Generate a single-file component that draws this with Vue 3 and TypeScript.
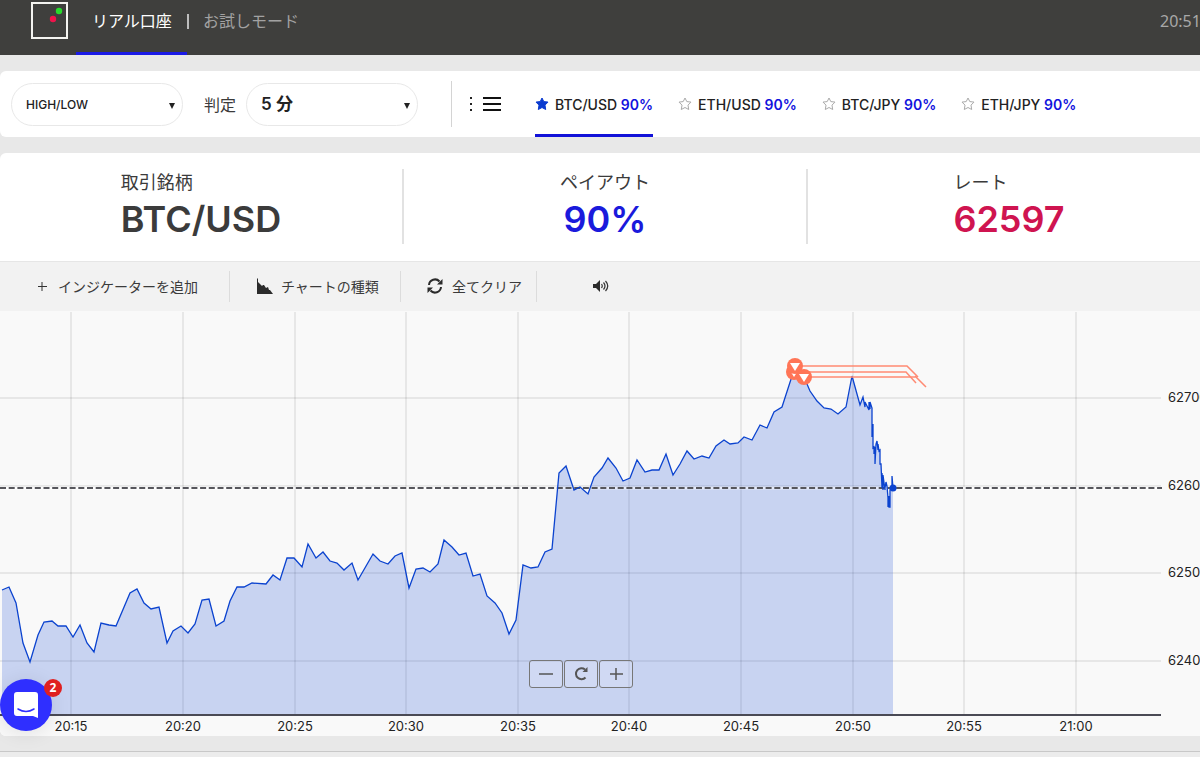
<script setup lang="ts">
import { ref } from 'vue'

interface Pair {
  symbol: string
  payout: string
  favourite: boolean
}

interface Tick {
  label: string
  at: number
}

const pairs: Pair[] = [
  { symbol: 'BTC/USD', payout: '90%', favourite: true },
  { symbol: 'ETH/USD', payout: '90%', favourite: false },
  { symbol: 'BTC/JPY', payout: '90%', favourite: false },
  { symbol: 'ETH/JPY', payout: '90%', favourite: false },
]

const activePair = ref('BTC/USD')

const times: Tick[] = [
  { label: '20:15', at: 71 },
  { label: '20:20', at: 183 },
  { label: '20:25', at: 295 },
  { label: '20:30', at: 406 },
  { label: '20:35', at: 518 },
  { label: '20:40', at: 629 },
  { label: '20:45', at: 741 },
  { label: '20:50', at: 853 },
  { label: '20:55', at: 964 },
  { label: '21:00', at: 1076 },
]

const prices: Tick[] = [
  { label: '62700', at: 398 },
  { label: '62600', at: 486 },
  { label: '62500', at: 573 },
  { label: '62400', at: 661 },
]

const series: string = [
  '2,590 9,587 16,603 23,643 30,662 38,635 44,622 52,621 58,626 66,626 73,637 80,625 87,643 94,652',
  '101,623 109,625 116,626 130,593 137,589 144,603 151,609 159,607 167,643 173,631 181,626 188,633',
  '195,624 202,600 209,599 216,626 224,621 230,601 237,587 244,587 252,583 266,584 273,575 280,580',
  '287,558 294,558 302,567 308,544 316,558 323,552 330,561 337,563 344,570 352,563 358,580 373,554',
  '380,561 388,564 395,556 402,553 409,588 416,569 423,568 430,572 438,564 444,540 452,547 459,555',
  '466,553 473,576 480,574 487,596 495,603 502,613 509,634 516,620 523,565 531,568 538,567 545,552',
  '552,549 559,473 566,466 574,490 580,487 588,494 594,477 602,468 608,458 616,468 623,481 630,478',
  '637,460 645,472 652,470 659,470 666,454 673,475 680,464 687,451 694,459 702,456 709,458 716,446',
  '724,440 730,444 738,443 744,437 752,440 760,425 767,428 774,412 782,407 792,376 798,370 804,377',
  '810,391 817,401 824,408 831,409 838,414 846,407 852,376 860,405 863,397 865,407 865,402 867,406',
  '869,410 869,402 870,409 870,402 872,408 872,437 873,424 873,448 874,447 874,454 875,447 875,464',
  '876,444 877,441 878,450 878,444 879,451 880,450 880,464 881,464 882,488 882,473 883,490 883,475',
  '885,490 885,488 886,482 887,486 888,498 888,507 889,496 889,507 890,507 890,490 892,487 892,476 893,488',
].join(' ')

const markers = [
  { x: 794, y: 372 },
  { x: 795, y: 366 },
  { x: 804, y: 377 },
]
</script>

<template>
  <div class="page">
    <header class="top">
      <a class="logo" href="#" aria-label="ホーム">
        <svg viewBox="0 0 37 37" width="37" height="37">
          <rect x="1" y="1" width="35" height="35" fill="none" stroke="#f4f4f0" stroke-width="2" />
          <circle cx="22" cy="17" r="3.200" fill="#f0134c" />
          <circle cx="28" cy="9" r="3.200" fill="#27dc2c" />
        </svg>
      </a>
      <nav class="modes">
        <a class="mode current" href="#real">リアル口座</a>
        <a class="mode" href="#trial">お試しモード</a>
      </nav>
      <time class="clock">20:51</time>
    </header>

    <section class="panel controls">
      <div class="pick">
        <select class="small" aria-label="取引種別">
          <option>HIGH/LOW</option>
        </select>
        <span class="arrow"></span>
      </div>
      <label class="judge" for="span">判定</label>
      <div class="pick">
        <select id="span" class="large">
          <option>5 分</option>
        </select>
        <span class="arrow"></span>
      </div>
      <div class="split"></div>
      <button class="list" type="button" aria-label="銘柄一覧">
        <svg viewBox="0 0 32 16" width="32" height="16">
          <path d="M1 1h2v2H1zM1 7h2v2H1zM1 13h2v2H1z" fill="#222" />
          <path d="M14 2h18M14 8h18M14 14h18" stroke="#111" stroke-width="2" />
        </svg>
      </button>
      <nav class="pairs">
        <a
          v-for="pair in pairs"
          :key="pair.symbol"
          href="#pair"
          class="pair"
          :class="{ active: pair.symbol === activePair }"
          @click.prevent="activePair = pair.symbol"
        >
          <svg class="star" :class="{ on: pair.favourite }" viewBox="0 0 14 14" width="14" height="14">
            <path d="M7 1l1.800 3.600 4.200.5-3 3 .7 4.400L7 10.500l-3.700 2 .7-4.400-3-3 4.200-.5z" />
          </svg>
          <span>{{ pair.symbol }} <b>{{ pair.payout }}</b></span>
        </a>
      </nav>
    </section>

    <main class="panel board">
      <div class="rates">
        <div class="rate">
          <div>
            <div class="name">取引銘柄</div>
            <div class="value">BTC/USD</div>
          </div>
        </div>
        <div class="rate payout">
          <div>
            <div class="name">ペイアウト</div>
            <div class="value">90%</div>
          </div>
        </div>
        <div class="rate price">
          <div>
            <div class="name">レート</div>
            <div class="value">62597</div>
          </div>
        </div>
      </div>

      <div class="tools">
        <button class="tool add" type="button">
          <svg viewBox="0 0 10 10" width="10" height="10"><path d="M5 1v9M1 5.500h9" stroke="#333" /></svg>
          インジケーターを追加
        </button>
        <button class="tool kind" type="button">
          <svg viewBox="0 0 16 16" width="16" height="16">
            <path d="M0 0l1 1v3l2 2 2 2 1-1 1 0 2 3 2-1 1 3 1 0 3 4H0z" fill="#2b2b2b" />
          </svg>
          チャートの種類
        </button>
        <button class="tool clear" type="button">
          <svg viewBox="0 0 16 16" width="16" height="16">
            <path d="M2 7a6 6 0 0 1 10.500-3.500M14 9a6 6 0 0 1-10.500 3.500" fill="none" stroke="#2b2b2b" stroke-width="2" />
            <path d="M15.500 1v5.500H10zM.5 15V9.500H6z" fill="#2b2b2b" />
          </svg>
          全てクリア
        </button>
        <button class="tool sound" type="button" aria-label="サウンド">
          <svg viewBox="0 0 16 14" width="16" height="14">
            <path d="M0 5h3l4-4v12L3 9H0z" fill="#2b2b2b" />
            <path d="M8.500 5q1.500 2 0 4M10.500 3.500q3 3.500 0 7M12.500 2q4.500 5 0 10" fill="none" stroke="#333" stroke-width="1.200" />
          </svg>
        </button>
      </div>

      <div class="chart">
        <svg class="plot" viewBox="0 311 1200 425" role="img" aria-label="BTC/USD チャート">
          <g stroke="#000" stroke-opacity="0.070" stroke-width="2">
            <path v-for="t in times" :key="t.label" :d="`M${t.at} 312V714`" />
            <path v-for="p in prices" :key="p.label" :d="`M0 ${p.at}H1161`" />
          </g>
          <polygon :points="`2,714 ${series} 893,714`" fill="#1149d6" fill-opacity="0.210" />
          <path d="M0 488H1162" stroke="#fff" stroke-opacity="0.500" stroke-width="3" />
          <path d="M0 488H1162" stroke="#56565c" stroke-width="2" stroke-dasharray="6 2.700" />
          <polyline :points="series" fill="none" stroke="#0b43cf" stroke-width="1.300" />
          <circle cx="893" cy="488" r="3.500" fill="#0b43cf" />
          <path d="M0 715H1161" stroke="#4a4a55" stroke-width="2" />
          <g fill="none" stroke="#ff8a73" stroke-width="1.500">
            <path d="M795 366H907L918 377" />
            <path d="M794 372H906L916 383" />
            <path d="M804 377H917M915 376L926 387" />
          </g>
          <g v-for="m in markers" :key="m.x" :transform="`translate(${m.x} ${m.y})`">
            <circle r="8" fill="#ff7557" />
            <path d="M-5-3H5L0 5z" fill="#fff" />
          </g>
          <g class="ticks">
            <text v-for="t in times" :key="t.label" :x="t.at" y="731" text-anchor="middle">{{ t.label }}</text>
            <text v-for="p in prices" :key="p.label" x="1168" :y="p.at + 4">{{ p.label }}</text>
          </g>
        </svg>
        <div class="zoom">
          <button type="button" aria-label="縮小">
            <svg viewBox="0 0 16 16" width="16" height="16"><path d="M1 8h14" /></svg>
          </button>
          <button type="button" aria-label="リセット">
            <svg viewBox="0 0 16 16" width="16" height="16">
              <path d="M12.500 11.500a5.500 5.500 0 1 1-.5-8" class="bold" />
              <path d="M14.500 1v5H9.500z" class="solid" />
            </svg>
          </button>
          <button type="button" aria-label="拡大">
            <svg viewBox="0 0 16 16" width="16" height="16"><path d="M2 8h13M8 2v12" /></svg>
          </button>
        </div>
      </div>
    </main>

    <footer class="foot"></footer>

    <button class="chat" type="button" aria-label="チャット">
      <svg viewBox="0 0 24 28" width="24" height="28">
        <path d="M3 1h18q3 0 3 3v23l-5-2H3q-3 0-3-3V4q0-3 3-3z" fill="#fff" />
        <path d="M4 18q8 5 16 0" fill="none" stroke="#2f2fff" stroke-width="1.500" stroke-linecap="round" />
      </svg>
      <span class="badge">2</span>
    </button>
  </div>
</template>

<style>
body {
  margin: 0;
  background: #e8e8e8;
}
</style>

<style scoped>
.page {
  position: relative;
  overflow: hidden;
  min-height: 100vh;
  box-sizing: border-box;
  font-family: Inter, "Noto Sans CJK JP", sans-serif;
  color: #3b3b3b;
}
a {
  color: inherit;
  text-decoration: none;
}
button {
  border: 0;
  padding: 0;
  background: none;
  font: inherit;
  color: inherit;
}
svg {
  display: block;
  flex: none;
}
.top {
  display: flex;
  height: 55px;
  box-sizing: border-box;
  background: #3f3f3d;
  overflow: hidden;
}
.logo {
  margin: 2px 8px 0 31px;
}
.modes {
  display: flex;
  font-family: "Noto Sans CJK JP", sans-serif;
  font-size: 16px;
  line-height: 40px;
}
.mode {
  color: #a2a2a2;
  padding-left: 16px;
}
.mode.current {
  position: relative;
  box-sizing: border-box;
  width: 111px;
  color: #fff;
  border-bottom: 3px solid #1a1ae6;
}
.mode.current::after {
  content: "";
  position: absolute;
  right: -2px;
  top: 14px;
  width: 2px;
  height: 15px;
  background: #bdbdbd;
}
.clock {
  flex: none;
  margin-left: auto;
  width: 40px;
  font: 16px/42px "Noto Sans", sans-serif;
  color: #a8a8a8;
}
.panel {
  background: #fff;
  border-radius: 6px 0 0 6px;
}
.controls {
  display: flex;
  align-items: center;
  height: 66px;
  margin: 16px 0;
}
.pick {
  display: grid;
  align-items: center;
  flex: none;
  width: 172px;
  margin-left: 11px;
}
.judge + .pick {
  margin-left: 10px;
}
.pick > * {
  grid-area: 1 / 1;
}
select {
  appearance: none;
  height: 43px;
  border: 1px solid #e8e8e8;
  border-radius: 22px;
  background: #fff;
  padding: 0 30px 0 14px;
  color: #222;
  font-family: Inter, "Noto Sans CJK JP", sans-serif;
}
.small {
  font-size: 12px;
  font-weight: 500;
}
.large {
  font-size: 17px;
  font-weight: 600;
}
.arrow {
  justify-self: end;
  margin: 4px 8px 0 0;
  border: 3px solid transparent;
  border-top: 6px solid #222;
  border-bottom: 0;
  pointer-events: none;
}
.judge {
  margin-left: 21px;
  font-size: 16px;
}
.split {
  width: 1px;
  height: 46px;
  margin-left: 33px;
  background: #d4d4d4;
}
.list {
  margin-left: 17px;
}
.pairs {
  display: flex;
  align-self: stretch;
  gap: 25px;
  margin-left: 34px;
}
.pair {
  display: flex;
  align-items: center;
  gap: 6px;
  border-top: 3px solid transparent;
  border-bottom: 3px solid transparent;
  font-size: 14px;
  font-weight: 500;
  color: #222;
  white-space: nowrap;
}
.pair b {
  font-weight: 600;
  color: #1212dd;
}
.pair.active {
  border-bottom-color: #1212d8;
}
.star {
  fill: none;
  stroke: #aaa;
}
.star.on {
  fill: #0a3bd0;
  stroke: #0a3bd0;
}
.board {
  overflow: hidden;
}
.rates {
  display: grid;
  grid-template-columns: repeat(3, 1fr);
  width: calc(100% + 12px);
  padding: 16px 0 17px;
}
.rate {
  display: flex;
  justify-content: center;
  height: 75px;
  border-right: 2px solid #e2e2e2;
}
.name {
  font-size: 18px;
  line-height: 28px;
}
.value {
  font-size: 36px;
  font-weight: 600;
  line-height: 44px;
}
.payout {
  text-align: center;
}
.payout .value {
  color: #1a1adc;
}
.price .value {
  color: #cf1450;
}
.tools {
  display: flex;
  align-items: center;
  height: 50px;
  box-sizing: border-box;
  border-top: 1px solid #e6e6e6;
  background: #f2f2f2;
}
.tool {
  display: flex;
  align-items: center;
  box-sizing: border-box;
  height: 31px;
  padding-bottom: 2px;
  border-right: 1px solid #dcdcdc;
  font-size: 14px;
  white-space: nowrap;
}
.add {
  gap: 11px;
  width: 230px;
  padding-left: 37px;
}
.kind {
  gap: 8px;
  width: 171px;
  padding-left: 27px;
}
.clear {
  gap: 9px;
  width: 136px;
  padding-left: 26px;
}
.sound {
  border: 0;
  padding-left: 56px;
}
.chart {
  position: relative;
  background: #f9f9f9;
}
.plot {
  width: 100%;
  height: auto;
}
.ticks {
  font-size: 13px;
  fill: #222;
}
.zoom {
  position: absolute;
  left: 0;
  right: 38px;
  bottom: 48px;
  display: flex;
  justify-content: center;
  gap: 1px;
}
.zoom button {
  display: grid;
  place-items: center;
  box-sizing: border-box;
  width: 34px;
  height: 28px;
  border: 1px solid #777;
  border-radius: 3px;
  background: rgba(255, 255, 255, 0.15);
}
.zoom svg {
  fill: none;
  stroke: #555;
  stroke-width: 1.5;
}
.zoom .bold {
  stroke-width: 2;
}
.zoom .solid {
  fill: #555;
  stroke: none;
}
.foot {
  height: 5px;
  margin-top: 15px;
  border-top: 1px solid #c8c8c8;
  background: #ececec;
}
.chat {
  position: absolute;
  left: 0;
  bottom: 26px;
  display: grid;
  place-items: center;
  width: 52px;
  height: 52px;
  border-radius: 50%;
  background: #2f2fff;
  box-shadow: 0 2px 20px rgba(0, 0, 0, 0.1);
}
.badge {
  position: absolute;
  top: 0;
  right: -10px;
  width: 18px;
  height: 18px;
  border-radius: 50%;
  background: #e02020;
  color: #fff;
  font: 700 12px/18px "Open Sans", sans-serif;
}
</style>
